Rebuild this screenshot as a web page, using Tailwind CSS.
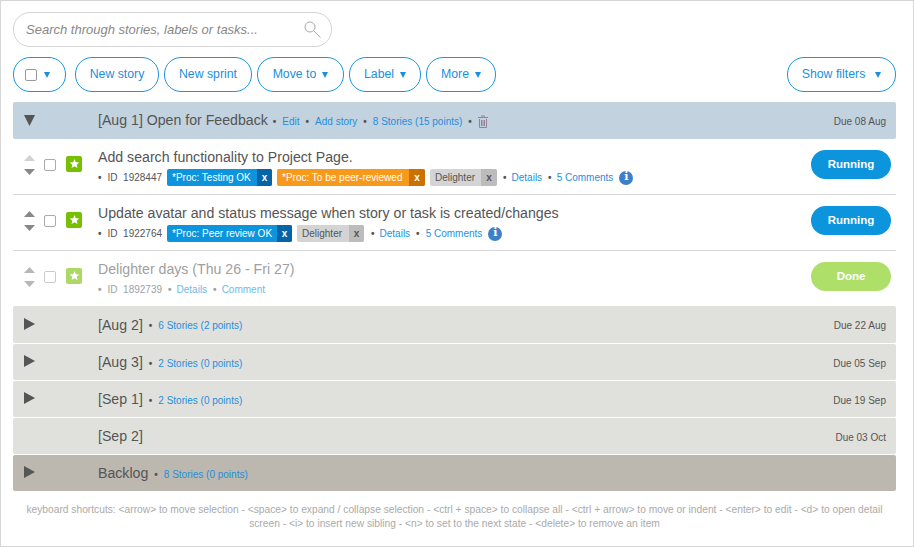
<!DOCTYPE html>
<html>
<head>
	<title>Stories</title>
	<script src="https://cdn.jsdelivr.net/npm/@tailwindcss/browser@4"></script>
</head>
<body class="bg-white">
	<div class="w-[914px] h-[547px] overflow-hidden border border-[#d6d6d6] font-['Liberation_Sans',Arial,sans-serif] text-[#555555] pl-[12px] pr-[17px] pt-[11px]">
		<!-- SEARCH -->
		<div class="flex items-center justify-between w-[319px] h-[35px] rounded-[17px] border border-[#d4d4d4] pl-[12px] pr-[10px]">
			<span class="italic text-[13px] text-[#888888]">Search through stories, labels or tasks...</span>
			<svg width="17" height="17" viewBox="0 0 17 17" fill="none" stroke="#a8a8a8" stroke-width="1"><circle cx="6" cy="6" r="5"/><path d="M10 10l6.500 6.500"/></svg>
		</div>

		<!-- TOOLBAR -->
		<div class="flex items-center mt-[10px] h-[35px] text-[12.3px] text-[#1a8fdc]">
			<div class="flex items-center h-[35px] w-[53px] rounded-[17px] border border-[#1b95dc] pl-[11px] gap-[7px]">
				<span class="block w-[12px] h-[12px] rounded-[2px] border border-[#999999]"></span>
				<svg width="6" height="6" viewBox="0 0 6 6" fill="#1a8fdc"><path d="M0 0h6L3 6z"/></svg>
			</div>
			<div class="flex items-center justify-center h-[35px] w-[84px] ml-[9px] rounded-[17px] border border-[#1b95dc] pb-[1px]">New story</div>
			<div class="flex items-center justify-center h-[35px] w-[88px] ml-[5px] rounded-[17px] border border-[#1b95dc] pb-[1px]">New sprint</div>
			<div class="flex items-center justify-center h-[35px] w-[87px] ml-[5px] rounded-[17px] border border-[#1b95dc] gap-[6px]">Move to <svg width="6" height="6" viewBox="0 0 6 6" fill="#1a8fdc"><path d="M0 0h6L3 6z"/></svg></div>
			<div class="flex items-center justify-center h-[35px] w-[72px] ml-[5px] rounded-[17px] border border-[#1b95dc] gap-[6px]">Label <svg width="6" height="6" viewBox="0 0 6 6" fill="#1a8fdc"><path d="M0 0h6L3 6z"/></svg></div>
			<div class="flex items-center justify-center h-[35px] w-[70px] ml-[5px] rounded-[17px] border border-[#1b95dc] gap-[6px]">More <svg width="6" height="6" viewBox="0 0 6 6" fill="#1a8fdc"><path d="M0 0h6L3 6z"/></svg></div>
			<div class="flex-grow"></div>
			<div class="flex items-center justify-center h-[35px] w-[109px] rounded-[17px] border border-[#1b95dc] gap-[10px]">Show filters <svg width="6" height="6" viewBox="0 0 6 6" fill="#1a8fdc"><path d="M0 0h6L3 6z"/></svg></div>
		</div>

		<!-- OPEN SPRINT -->
		<div class="flex items-center mt-[10px] h-[37px] bg-[#c3d2df] rounded-[2px]">
			<div class="w-[85px] pl-[11px] shrink-0"><svg width="11" height="11" viewBox="0 0 11 11" fill="#555555"><path d="M0 0h11L5.5 11z"/></svg></div>
			<span class="text-[14.15px] whitespace-nowrap">[Aug 1] Open for Feedback</span>
			<span class="flex items-center text-[10px] text-[#1f8fdc] whitespace-nowrap ml-[5px] gap-[6px] pt-[2px]">
				<b class="text-[#555555]">•</b><span>Edit</span><b class="text-[#555555]">•</b><span>Add story</span><b class="text-[#555555]">•</b><span>8 Stories (15 points)</span><b class="text-[#555555]">•</b>
				<svg width="10" height="13" viewBox="0 0 10 13" fill="none" stroke="#94809a"><path d="M0 2.500h10M3 1h4M1.500 4v8.500h7V4M3.500 5v6M5 5v6M6.500 5v6"/></svg>
			</span>
			<span class="ml-auto pr-[10px] pt-[2px] text-[10px] whitespace-nowrap">Due 08 Aug</span>
		</div>

		<!-- STORIES -->
		<div class="flex h-[56px] border-b border-[#d8d8d8]">
			<div class="flex items-center w-[85px] shrink-0 pl-[11px] pb-[4px]">
				<div class="flex flex-col gap-[8px]">
					<svg width="11" height="6" viewBox="0 0 11 6" fill="#d2d2d2"><path d="M5.500 0L11 6H0z"/></svg>
					<svg width="11" height="6" viewBox="0 0 11 6" fill="#888888"><path d="M0 0h11L5.500 6z"/></svg>
				</div>
				<span class="block w-[12px] h-[12px] ml-[9px] rounded-[2px] border border-[#aaaaaa]"></span>
				<span class="flex items-center justify-center w-[16px] h-[16px] ml-[10px] mb-[2px] rounded-[2px] bg-[#76c000]"><svg width="11" height="11" viewBox="0 0 24 24" fill="#ffffff"><path d="M12 2l3 7 7.500.6-5.700 4.900 1.800 7.500L12 18l-6.600 4 1.800-7.500L1.500 9.600 9 9z"/></svg></span>
			</div>
			<div class="flex-grow pt-[9px]">
				<div class="text-[14.15px] leading-[19px] whitespace-nowrap">Add search functionality to Project Page.</div>
				<div class="flex items-center mt-[2px] h-[17px] text-[10px] whitespace-nowrap">
					<b class="mr-[6px]">•</b><span class="mr-[5px]">ID&nbsp; 1928447</span>
					<span class="flex h-[17px] rounded-[2px] overflow-hidden bg-[#0c94dc] text-white leading-[17px] mr-[5px]"><span class="px-[5px] w-[90px]">*Proc: Testing OK</span><span class="w-[15px] text-center font-bold bg-[#0563a8]">x</span></span>
					<span class="flex h-[17px] rounded-[2px] overflow-hidden bg-[#f79a1c] text-white leading-[17px] mr-[5px]"><span class="px-[5px] w-[132px]">*Proc: To be peer-reviewed</span><span class="w-[16px] text-center font-bold bg-[#c97200]">x</span></span>
					<span class="flex h-[17px] rounded-[2px] overflow-hidden bg-[#d4d4d4] leading-[17px] mr-[5px]"><span class="px-[5px] w-[51px]">Delighter</span><span class="w-[16px] text-center font-bold bg-[#bcbcbc]">x</span></span>
					<b class="mr-[5px] ml-[1px]">•</b><span class="text-[#1f8fdc] mr-[6px]">Details</span><b class="mr-[5px]">•</b><span class="text-[#1f8fdc] mr-[6px]">5 Comments</span>
					<span class="flex items-center justify-center w-[14px] h-[14px] rounded-full bg-[#3d7fc9] text-white text-[11px] font-bold font-['DejaVu_Serif',serif]">i</span>
				</div>
			</div>
			<div class="flex items-center pr-[5px] pb-[4px]">
				<span class="flex items-center justify-center w-[80px] h-[29px] rounded-[15px] bg-[#0c94dc] text-white text-[11.5px] font-bold">Running</span>
			</div>
		</div>

		<div class="flex h-[56px] border-b border-[#d8d8d8]">
			<div class="flex items-center w-[85px] shrink-0 pl-[11px] pb-[4px]">
				<div class="flex flex-col gap-[8px]">
					<svg width="11" height="6" viewBox="0 0 11 6" fill="#888888"><path d="M5.500 0L11 6H0z"/></svg>
					<svg width="11" height="6" viewBox="0 0 11 6" fill="#888888"><path d="M0 0h11L5.500 6z"/></svg>
				</div>
				<span class="block w-[12px] h-[12px] ml-[9px] rounded-[2px] border border-[#aaaaaa]"></span>
				<span class="flex items-center justify-center w-[16px] h-[16px] ml-[10px] mb-[2px] rounded-[2px] bg-[#76c000]"><svg width="11" height="11" viewBox="0 0 24 24" fill="#ffffff"><path d="M12 2l3 7 7.500.6-5.700 4.900 1.800 7.500L12 18l-6.600 4 1.800-7.500L1.500 9.600 9 9z"/></svg></span>
			</div>
			<div class="flex-grow pt-[9px]">
				<div class="text-[14.15px] leading-[19px] whitespace-nowrap">Update avatar and status message when story or task is created/changes</div>
				<div class="flex items-center mt-[2px] h-[17px] text-[10px] whitespace-nowrap">
					<b class="mr-[6px]">•</b><span class="mr-[5px]">ID&nbsp; 1922764</span>
					<span class="flex h-[17px] rounded-[2px] overflow-hidden bg-[#0c94dc] text-white leading-[17px] mr-[5px]"><span class="px-[5px] w-[110px]">*Proc: Peer review OK</span><span class="w-[15px] text-center font-bold bg-[#0563a8]">x</span></span>
					<span class="flex h-[17px] rounded-[2px] overflow-hidden bg-[#d4d4d4] leading-[17px] mr-[5px]"><span class="px-[5px] w-[52px]">Delighter</span><span class="w-[15px] text-center font-bold bg-[#bcbcbc]">x</span></span>
					<b class="mr-[5px] ml-[2px]">•</b><span class="text-[#1f8fdc] mr-[6px]">Details</span><b class="mr-[6px]">•</b><span class="text-[#1f8fdc] mr-[6px]">5 Comments</span>
					<span class="flex items-center justify-center w-[14px] h-[14px] rounded-full bg-[#3d7fc9] text-white text-[11px] font-bold font-['DejaVu_Serif',serif]">i</span>
				</div>
			</div>
			<div class="flex items-center pr-[5px] pb-[4px]">
				<span class="flex items-center justify-center w-[80px] h-[29px] rounded-[15px] bg-[#0c94dc] text-white text-[11.5px] font-bold">Running</span>
			</div>
		</div>

		<div class="flex h-[55px]">
			<div class="flex items-center w-[85px] shrink-0 pl-[11px] pb-[4px] opacity-60">
				<div class="flex flex-col gap-[8px]">
					<svg width="11" height="6" viewBox="0 0 11 6" fill="#888888"><path d="M5.500 0L11 6H0z"/></svg>
					<svg width="11" height="6" viewBox="0 0 11 6" fill="#888888"><path d="M0 0h11L5.500 6z"/></svg>
				</div>
				<span class="block w-[12px] h-[12px] ml-[9px] rounded-[2px] border border-[#aaaaaa]"></span>
				<span class="flex items-center justify-center w-[16px] h-[16px] ml-[10px] mb-[2px] rounded-[2px] bg-[#76c000]"><svg width="11" height="11" viewBox="0 0 24 24" fill="#ffffff"><path d="M12 2l3 7 7.500.6-5.700 4.900 1.800 7.500L12 18l-6.600 4 1.800-7.500L1.500 9.600 9 9z"/></svg></span>
			</div>
			<div class="flex-grow pt-[9px] text-[#a0a0a0]">
				<div class="text-[14.15px] leading-[19px] whitespace-nowrap">Delighter days (Thu 26 - Fri 27)</div>
				<div class="flex items-center mt-[2px] h-[17px] text-[10px] whitespace-nowrap">
					<b class="mr-[6px]">•</b><span class="mr-[6px]">ID&nbsp; 1892739</span>
					<b class="mr-[5px]">•</b><span class="text-[#6dbbe8] mr-[6px]">Details</span><b class="mr-[5px]">•</b><span class="text-[#6dbbe8]">Comment</span>
				</div>
			</div>
			<div class="flex items-center pr-[5px] pb-[4px]">
				<span class="flex items-center justify-center w-[80px] h-[29px] rounded-[15px] bg-[#aedf68] text-white text-[11.5px] font-bold">Done</span>
			</div>
		</div>

		<!-- OTHER SPRINTS -->
		<div class="flex items-center h-[37px] pt-[2px] bg-[#e0e1dc] rounded-[2px]">
			<div class="w-[85px] pl-[11px] shrink-0 pb-[4px]"><svg width="11" height="12" viewBox="0 0 11 12" fill="#555555"><path d="M0 0l11 6-11 6z"/></svg></div>
			<span class="text-[14.15px]">[Aug 2]</span>
			<span class="text-[10px] text-[#1f8fdc] ml-[6px] flex items-center gap-[6px]"><b class="text-[#555555]">•</b>6 Stories (2 points)</span>
			<span class="ml-auto pr-[10px] text-[10px]">Due 22 Aug</span>
		</div>
		<div class="flex items-center h-[36px] pt-[2px] mt-[1px] bg-[#e0e1dc] rounded-[2px]">
			<div class="w-[85px] pl-[11px] shrink-0 pb-[4px]"><svg width="11" height="12" viewBox="0 0 11 12" fill="#555555"><path d="M0 0l11 6-11 6z"/></svg></div>
			<span class="text-[14.15px]">[Aug 3]</span>
			<span class="text-[10px] text-[#1f8fdc] ml-[6px] flex items-center gap-[6px]"><b class="text-[#555555]">•</b>2 Stories (0 points)</span>
			<span class="ml-auto pr-[10px] text-[10px]">Due 05 Sep</span>
		</div>
		<div class="flex items-center h-[36px] pt-[2px] mt-[1px] bg-[#e0e1dc] rounded-[2px]">
			<div class="w-[85px] pl-[11px] shrink-0 pb-[4px]"><svg width="11" height="12" viewBox="0 0 11 12" fill="#555555"><path d="M0 0l11 6-11 6z"/></svg></div>
			<span class="text-[14.15px]">[Sep 1]</span>
			<span class="text-[10px] text-[#1f8fdc] ml-[6px] flex items-center gap-[6px]"><b class="text-[#555555]">•</b>2 Stories (0 points)</span>
			<span class="ml-auto pr-[10px] text-[10px]">Due 19 Sep</span>
		</div>
		<div class="flex items-center h-[36px] pt-[2px] mt-[1px] bg-[#e0e1dc] rounded-[2px]">
			<div class="w-[85px] shrink-0"></div>
			<span class="text-[14.15px]">[Sep 2]</span>
			<span class="ml-auto pr-[10px] text-[10px]">Due 03 Oct</span>
		</div>
		<div class="flex items-center h-[36px] pt-[2px] mt-[1px] bg-[#bcb7af] rounded-[2px]">
			<div class="w-[85px] pl-[11px] shrink-0 pb-[4px]"><svg width="11" height="12" viewBox="0 0 11 12" fill="#555555"><path d="M0 0l11 6-11 6z"/></svg></div>
			<span class="text-[14.15px]">Backlog</span>
			<span class="text-[10px] text-[#1f8fdc] ml-[6px] flex items-center gap-[6px]"><b class="text-[#555555]">•</b>8 Stories (0 points)</span>
		</div>

		<!-- SHORTCUTS -->
		<div class="mt-[12px] px-[10px] text-center text-[10.24px] leading-[14px] text-[#aaaaaa]">
			keyboard shortcuts: &lt;arrow&gt; to move selection - &lt;space&gt; to expand / collapse selection - &lt;ctrl + space&gt; to collapse all - &lt;ctrl + arrow&gt; to move or indent - &lt;enter&gt; to edit - &lt;d&gt; to open detail screen - &lt;i&gt; to insert new sibling - &lt;n&gt; to set to the next state - &lt;delete&gt; to remove an item
		</div>
	</div>
</body>
</html>
